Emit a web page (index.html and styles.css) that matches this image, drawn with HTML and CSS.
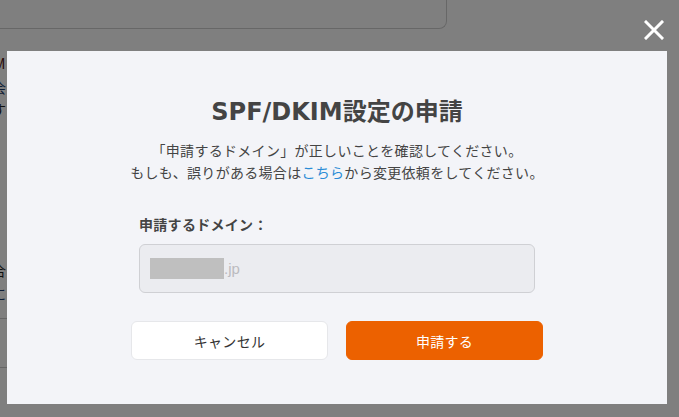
FILE: index.html
```html
<!DOCTYPE html>
<html lang="ja">
<head>
<meta charset="utf-8">
<title>SPF/DKIM設定の申請</title>
<link rel="stylesheet" href="styles.css">
</head>
<body>
<div class="page">
  <div class="top-card"></div>
  <div class="side">
    <p class="frag f1">M</p>
    <p class="frag f2">会</p>
    <p class="frag f3">す</p>
    <p class="frag f4">合</p>
    <p class="frag f5">に</p>
    <div class="rule r1"></div>
    <div class="rule r2"></div>
  </div>
</div>
<div class="overlay"></div>
<button class="close" aria-label="閉じる">
  <svg width="20" height="20" viewBox="0 0 20 20"><path d="M2 2L18 18M18 2L2 18" stroke="#fff" stroke-width="3" stroke-linecap="square"/></svg>
</button>
<div class="modal">
  <h1 class="title">SPF/DKIM設定の申請</h1>
  <p class="desc">「申請するドメイン」が正しいことを確認してください。<br>もしも、誤りがある場合は<a class="link" href="#">こちら</a>から変更依頼をしてください。</p>
  <div class="form">
    <div class="label">申請するドメイン：</div>
    <div class="field"><span class="mask"></span><span class="tld">.jp</span></div>
  </div>
  <div class="actions">
    <button class="btn btn-cancel">キャンセル</button>
    <button class="btn btn-submit">申請する</button>
  </div>
</div>
</body>
</html>
```
FILE: styles.css
```css
html, body {
  margin: 0;
  padding: 0;
  width: 679px;
  height: 417px;
  overflow: hidden;
}
body {
  background: #ffffff;
  font-family: "Noto Sans CJK JP", "Noto Sans", sans-serif;
  color: #333;
  position: relative;
}
.page {
  width: 679px;
  height: 417px;
}
.top-card {
  width: 446px;
  height: 28px;
  border: 1px solid #cfcfcf;
  border-top: none;
  border-left: none;
  border-radius: 0 0 8px 0;
}
.side {
  position: relative;
  height: 380px;
}
.frag {
  position: absolute;
  margin: 0;
  left: -8px;
  font-size: 14px;
  line-height: 16px;
  color: #222;
}
.f1 { top: 26px; left: -6px; color: #4a1010; }
.f2 { top: 50px; color: #1a3b6a; }
.f3 { top: 72px; }
.f4 { top: 233px; }
.f5 { top: 256px; color: #1a3b6a; }
.rule {
  position: absolute;
  left: 0;
  width: 20px;
  height: 1px;
  background: #cccccc;
}
.r1 { top: 289px; }
.r2 { top: 338px; }
.overlay {
  position: absolute;
  inset: 0;
  background: rgba(0, 0, 0, 0.5);
}
.close {
  position: absolute;
  left: 644px;
  top: 20px;
  width: 20px;
  height: 20px;
  padding: 0;
  border: none;
  background: none;
  display: flex;
}
.modal {
  position: absolute;
  left: 7px;
  top: 51px;
  width: 660px;
  height: 353px;
  box-sizing: border-box;
  background: #f3f4f8;
  padding-top: 45px;
  display: flex;
  flex-direction: column;
  align-items: center;
}
.title {
  margin: 0;
  font-family: "DejaVu Sans", "Noto Sans CJK JP", sans-serif;
  font-size: 24px;
  line-height: 32px;
  font-weight: 700;
  color: #444;
}
.desc {
  margin: 11px 0 0;
  font-size: 14px;
  line-height: 22px;
  letter-spacing: 0.3px;
  text-align: center;
  color: #444;
}
.link {
  color: #2a8cd6;
  text-decoration: none;
}
.form {
  width: 396px;
  margin-top: 30px;
}
.label {
  font-size: 14px;
  line-height: 22px;
  font-weight: 700;
  letter-spacing: 0.3px;
  color: #444;
}
.field {
  margin-top: 9px;
  height: 49px;
  box-sizing: border-box;
  border: 1px solid #cfd0d4;
  border-radius: 6px;
  background: #ebecf0;
  display: flex;
  align-items: center;
  padding-left: 10px;
}
.mask {
  display: block;
  width: 74px;
  height: 21px;
  background: #bfbfbf;
}
.tld {
  font-family: "Liberation Sans", sans-serif;
  font-size: 15px;
  color: #bbbbbf;
}
.actions {
  margin-top: 28px;
  display: flex;
  gap: 18px;
}
.btn {
  width: 197px;
  height: 39px;
  border-radius: 6px;
  font-family: "Noto Sans CJK JP", sans-serif;
  font-size: 14px;
  letter-spacing: 0.3px;
  padding: 0;
}
.btn-cancel {
  background: #ffffff;
  border: 1px solid #e6e7ea;
  color: #333;
}
.btn-submit {
  background: #ec6100;
  border: 1px solid #ec6100;
  color: #ffffff;
}
```
